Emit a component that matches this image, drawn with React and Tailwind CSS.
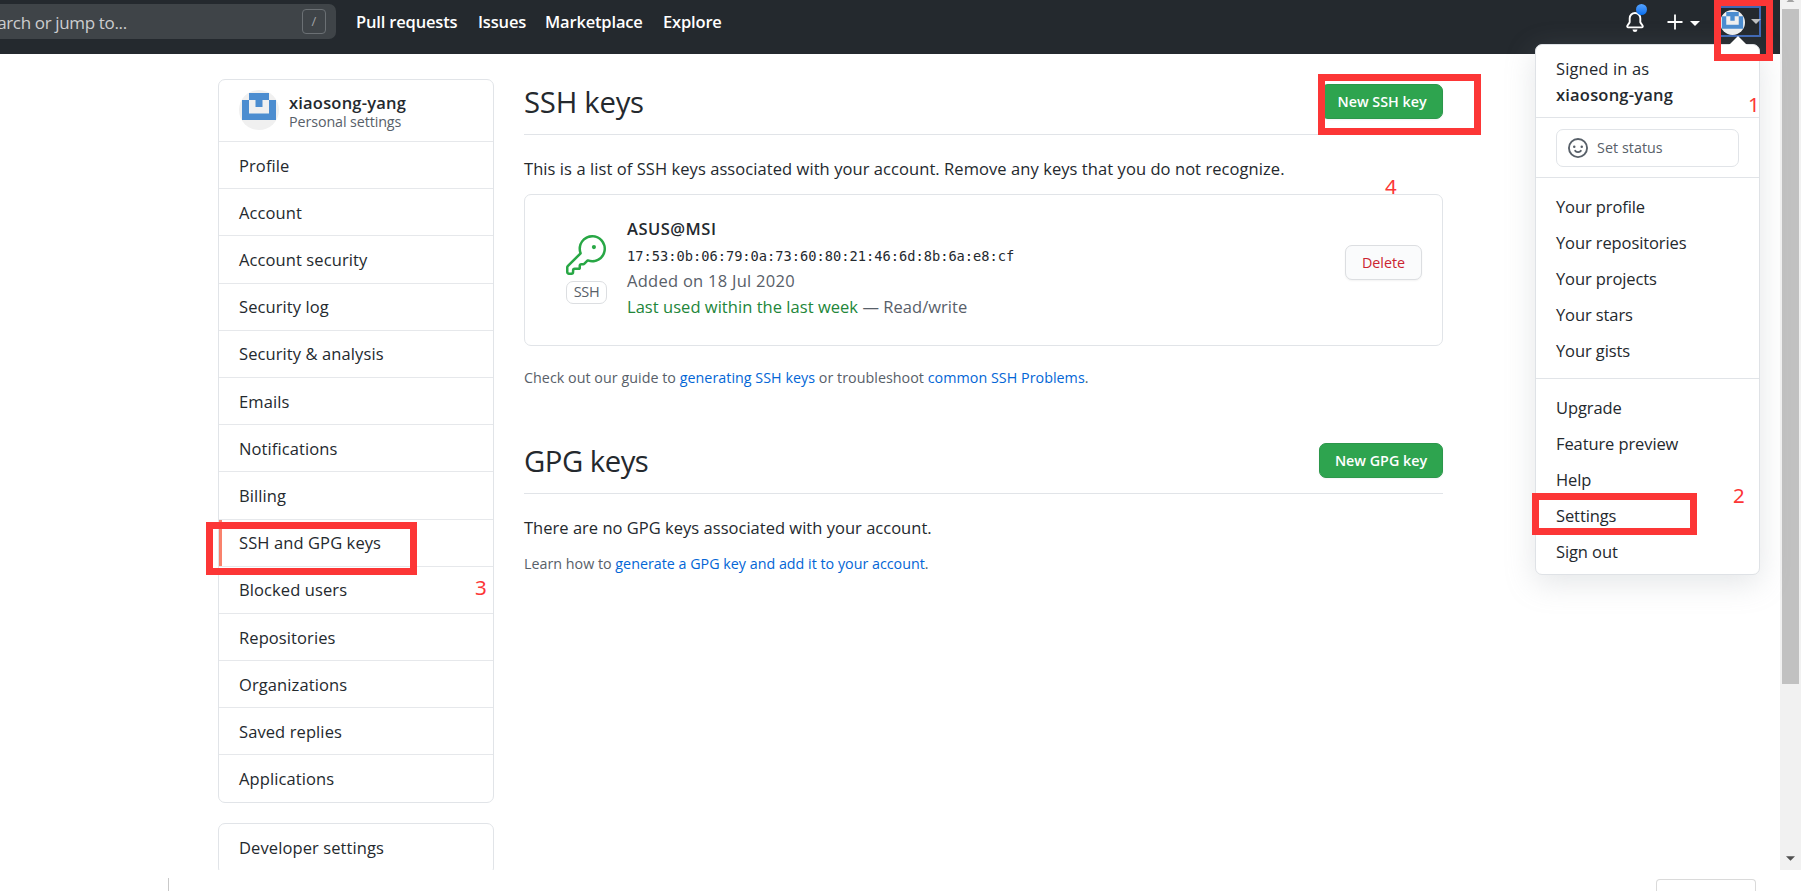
const navItems = [
  'Profile', 'Account', 'Account security', 'Security log', 'Security & analysis', 'Emails', 'Notifications',
  'Billing', 'SSH and GPG keys', 'Blocked users', 'Repositories', 'Organizations', 'Saved replies', 'Applications',
];

function Identicon({ className }) {
  return (
    <svg viewBox="0 0 40 40" className={className}>
      <circle cx="20" cy="20" r="20" fill="#f0f0f0" />
      <path fill="#4c8dd0" fillRule="evenodd" d="M10 3h20v7h7v20H3V10h7zM10 10v13.5h20V10h-6.5v7h-7v-7z" />
    </svg>
  );
}

function Bell() {
  return (
    <svg viewBox="0 0 16 16" fill="currentColor" className="h-5 w-5">
      <path d="M8 16a2 2 0 001.985-1.75c.017-.137-.097-.25-.235-.25h-3.5c-.138 0-.252.113-.235.25A2 2 0 008 16z" />
      <path fillRule="evenodd" d="M8 1.5A3.5 3.5 0 004.5 5v2.947c0 .346-.102.683-.294.97l-1.703 2.556a.018.018 0 00-.003.01l.001.006c0 .002.002.004.004.006a.017.017 0 00.006.004l.007.001h10.964l.007-.001a.016.016 0 00.006-.004.016.016 0 00.004-.006l.001-.007a.017.017 0 00-.003-.01l-1.703-2.554a1.75 1.75 0 01-.294-.97V5A3.5 3.5 0 008 1.5zM3 5a5 5 0 0110 0v2.947c0 .05.015.098.042.139l1.703 2.555A1.518 1.518 0 0113.482 13H2.518a1.518 1.518 0 01-1.263-2.36l1.703-2.554A.25.25 0 003 7.947V5z" />
    </svg>
  );
}

function Smiley() {
  return (
    <svg viewBox="0 0 16 16" fill="currentColor" className="h-5 w-5">
      <path fillRule="evenodd" d="M1.5 8a6.5 6.5 0 1113 0 6.5 6.5 0 01-13 0zM8 0a8 8 0 100 16A8 8 0 008 0zM5 8a1 1 0 100-2 1 1 0 000 2zm7-1a1 1 0 11-2 0 1 1 0 012 0zM5.32 9.636a.75.75 0 011.038.175l.007.009c.103.118.22.222.35.31.264.178.683.37 1.285.37.602 0 1.02-.192 1.285-.371.13-.088.247-.192.35-.31l.007-.008a.75.75 0 111.222.87c-.07.1-.12.16-.204.24-.16.166-.338.316-.53.445-.63.418-1.37.638-2.127.629-.946 0-1.652-.308-2.126-.63a3.331 3.331 0 01-.734-.683.75.75 0 01.183-1.044z" />
    </svg>
  );
}

function Key() {
  return (
    <svg viewBox="0 0 24 24" fill="#28a745" className="-ml-px h-10 w-10">
      <path d="M16.75 8.5a1.25 1.25 0 100-2.5 1.25 1.25 0 000 2.5z" />
      <path fillRule="evenodd" d="M15.75 0a8.25 8.25 0 00-7.851 10.79L.513 18.178A1.75 1.75 0 000 19.414v2.836C0 23.217.784 24 1.75 24h1.5A1.75 1.75 0 005 22.25v-1a.25.25 0 01.25-.25h2.735a.75.75 0 00.545-.22l.214-.213A.875.875 0 009 19.948V18.5a.25.25 0 01.25-.25h1.086c.464 0 .91-.184 1.237-.513l1.636-1.636A8.25 8.25 0 1015.75 0zM9 8.25a6.75 6.75 0 114.288 6.287.75.75 0 00-.804.168l-1.971 1.972a.25.25 0 01-.177.073H9.25A1.75 1.75 0 007.5 18.5v1H5.25a1.75 1.75 0 00-1.75 1.75v1a.25.25 0 01-.25.25h-1.5a.25.25 0 01-.25-.25v-2.836a.25.25 0 01.073-.177l7.722-7.721a.75.75 0 00.168-.804A6.73 6.73 0 019 8.25z" />
    </svg>
  );
}

function Caret({ className }) {
  return (
    <svg viewBox="0 0 10 5" fill="currentColor" className={className}>
      <path d="M0 0h10L5 5z" />
    </svg>
  );
}

function Header() {
  return (
    <header className="flex h-[54px] items-start bg-[#24292e] text-white">
      <div className="mt-1 flex h-[35px] w-[336px] shrink-0 items-center justify-between overflow-hidden rounded-r-[7px] bg-[#3f4448] pr-2.5">
        <span className="-ml-[21px] pt-0.5 text-[17px] tracking-[-0.35px] text-[#cccdcf]">Search or jump to...</span>
        <span className="flex h-[25px] w-6 items-center justify-center rounded-[4px] border border-[#6b7074] text-[13px] text-[#a0a3a6]">/</span>
      </div>
      <nav className="ml-5 flex h-11 items-center gap-5 text-[16.5px] font-semibold tracking-[-0.17px] whitespace-nowrap">
        <span className="w-[102px]">Pull requests</span>
        <span className="w-[47px]">Issues</span>
        <span className="w-[98px]">Marketplace</span>
        <span className="w-[59px]">Explore</span>
      </nav>
      <div className="ml-auto flex h-11 items-center pr-[19px]">
        <span className="relative">
          <Bell />
          <span className="absolute -top-2 left-[11px] h-[11px] w-[11px] rounded-full bg-linear-to-b from-[#54a3ff] to-[#006eed]" />
        </span>
        <svg viewBox="0 0 16 16" className="ml-[22px] h-4 w-4" stroke="white" strokeWidth="1.8"><path d="M8 .5v15M.5 8h15" /></svg>
        <Caret className="ml-[7px] mt-[3px] h-[5px] w-[10px]" />
        <span className="ml-[18px] mt-[-2px] flex h-[31px] w-[43px] items-center gap-[6px] border-2 border-[#4169b5]">
          <Identicon className="mt-[3px] h-[25px] w-[25px] shrink-0" />
          <Caret className="h-[5px] w-[10px] shrink-0 text-[#bdbfc0]" />
        </span>
      </div>
    </header>
  );
}

function Sidebar() {
  return (
    <aside className="ml-[218px] w-[276px] shrink-0">
      <div className="rounded-[7px] border border-[#e1e4e8]">
        <div className="flex h-[61px] items-center pl-5">
          <Identicon className="-mt-px h-10 w-10" />
          <div className="ml-2.5 mt-1">
            <div className="text-[16.5px] leading-[18px] font-semibold tracking-[0.2px]">xiaosong-yang</div>
            <div className="text-[14.3px] leading-[19px] tracking-[-0.1px] text-[#586069]">Personal settings</div>
          </div>
        </div>
        {navItems.map((name) => (
          <div key={name} className={`relative flex h-[47.2px] items-center border-t border-[#e6e8eb] pt-0.5 pl-5 text-[16.5px] tracking-[0.1px] ${name === 'SSH and GPG keys' ? 'before:absolute before:inset-y-0 before:left-0 before:w-[3px] before:bg-[#f9826c]' : ''}`}>
            {name}
          </div>
        ))}
      </div>
      <div className="mt-5 flex h-[52px] items-center rounded-[7px] border border-[#e1e4e8] pl-5 text-[16.5px] tracking-[0.1px]">Developer settings</div>
    </aside>
  );
}

function GreenButton({ className, children }) {
  return (
    <button className={`flex h-[35px] items-center justify-center rounded-[7px] border border-[#2c974b] bg-[#2ea44f] text-[14.3px] font-semibold whitespace-nowrap text-white shadow-xs ${className}`}>
      {children}
    </button>
  );
}

function Content() {
  return (
    <main className="ml-[30px] w-[919px] shrink-0">
      <div className="flex h-14 items-start justify-between border-b border-[#e1e4e8] pt-[5px]">
        <h2 className="text-[29.3px] leading-9 tracking-[-0.25px]">SSH keys</h2>
        <GreenButton className="w-[122px]">New SSH key</GreenButton>
      </div>
      <p className="mt-[21px] text-[16.5px] leading-[26px] whitespace-nowrap tracking-[0.07px]">This is a list of SSH keys associated with your account. Remove any keys that you do not recognize.</p>
      <section className="mt-3 flex h-[152px] items-center rounded-[7px] border border-[#e1e4e8] pr-[20px] pl-[41px]">
        <div className="mb-0.5 flex w-[41px] flex-col items-center">
          <Key />
          <span className="mt-1.5 flex h-[23px] w-[41px] items-center justify-center rounded-[7px] border border-[#dcdee1] text-[14.5px] tracking-[-0.4px] text-[#586069]">SSH</span>
        </div>
        <div className="mb-[5px] ml-5 flex-1 text-[16.5px] leading-[26px] tracking-[0.04px] whitespace-nowrap text-[#586069]">
          <div className="font-semibold tracking-[0.5px] text-[#24292e]">ASUS@MSI</div>
          <div className="pt-0.5 font-['DejaVu_Sans_Mono','Liberation_Mono',monospace] text-[13.7px] leading-6 tracking-normal text-[#24292e]">17:53:0b:06:79:0a:73:60:80:21:46:6d:8b:6a:e8:cf</div>
          <div className="tracking-[0.27px]">Added on 18 Jul 2020</div>
          <div><span className="text-[#22863a]">Last used within the last week</span> — Read/write</div>
        </div>
        <button className="mb-[15px] h-[35px] w-[77px] rounded-[7px] border border-[#dcdee1] bg-[#fafbfc] text-[14.3px] font-medium text-[#cb2431] shadow-xs">Delete</button>
      </section>
      <p className="mt-5 text-[14.3px] leading-6 tracking-[0.03px] whitespace-nowrap text-[#586069]">
        Check out our guide to <a className="text-[#0366d6]">generating SSH keys</a> or troubleshoot <a className="text-[#0366d6]">common SSH Problems</a>.
      </p>
      <div className="mt-[48px] flex h-14 items-start justify-between border-b border-[#e1e4e8] pt-[5px]">
        <h2 className="text-[29.3px] leading-9 tracking-[-0.5px]">GPG keys</h2>
        <GreenButton className="w-[124px]">New GPG key</GreenButton>
      </div>
      <p className="mt-[21px] text-[16.5px] leading-[26px] whitespace-nowrap tracking-[0.02px]">There are no GPG keys associated with your account.</p>
      <p className="mt-[11px] text-[14.3px] leading-6 whitespace-nowrap text-[#586069]">
        Learn how to <a className="text-[#0366d6]">generate a GPG key and add it to your account</a>.
      </p>
    </main>
  );
}

function MenuGroup({ items }) {
  return (
    <div className="border-t border-[#e1e4e8] pt-[11px] pb-[9px]">
      {items.map((item) => <div key={item} className="flex h-9 items-center pl-5">{item}</div>)}
    </div>
  );
}

function UserMenu() {
  return (
    <div className="absolute top-11 left-[1535px] h-[531px] w-[225px] rounded-[7px] border border-[#dfe2e6] bg-white text-[16.5px] tracking-[-0.1px] shadow-[0_8px_30px_rgba(149,157,165,0.25)]">
      <svg viewBox="0 0 18 9" fill="white" className="absolute -top-[9px] left-[193px] h-[9px] w-[18px]"><path d="M9 0l9 9H0z" /></svg>
      <div className="h-[72px] pt-[11px] pl-5 leading-[26px]">
        <div className="tracking-[0.15px]">Signed in as</div>
        <div className="font-semibold tracking-[0.2px]">xiaosong-yang</div>
      </div>
      <div className="h-[60px] border-t border-[#e1e4e8] pt-[11px] pl-5">
        <div className="flex h-[38px] w-[183px] items-center gap-[9px] rounded-[7px] border border-[#e1e4e8] pl-[11px] text-[14.3px] tracking-[0.05px] text-[#586069]"><Smiley />Set status</div>
      </div>
      <MenuGroup items={['Your profile', 'Your repositories', 'Your projects', 'Your stars', 'Your gists']} />
      <MenuGroup items={['Upgrade', 'Feature preview', 'Help', 'Settings', 'Sign out']} />
    </div>
  );
}

function Annotations() {
  return (
    <div className="font-['Noto_Sans','Noto_Sans_CJK_SC',sans-serif] text-[20.5px] leading-5 text-[#fc3636]">
      <div className="absolute -top-px left-[1714px] h-[62px] w-[59px] border-[7px] border-[#fc3636]" />
      <div className="absolute top-[74px] left-[1318px] h-[61px] w-[163px] border-[7px] border-[#fc3636]" />
      <div className="absolute top-[493px] left-[1532px] h-[42px] w-[165px] border-[7px] border-[#fc3636]" />
      <div className="absolute top-[522px] left-[206px] h-[53px] w-[211px] border-[7px] border-[#fc3636]" />
      <span className="absolute top-[94px] left-[1748px]">1</span>
      <span className="absolute top-[485px] left-[1733px]">2</span>
      <span className="absolute top-[577px] left-[475px]">3</span>
      <span className="absolute top-[176px] left-[1385px]">4</span>
    </div>
  );
}

export default function App() {
  return (
    <div className="relative h-[891px] w-[1801px] overflow-hidden bg-white font-['Open_Sans','Noto_Sans',sans-serif] text-[#24292e]">
      <div className="flex h-[870px] overflow-hidden">
        <div className="w-[1780px] shrink-0">
          <Header />
          <div className="flex pt-[25px]">
            <Sidebar />
            <Content />
          </div>
        </div>
        <div className="flex w-[21px] flex-col items-center bg-[#f1f1f1]">
          <Caret className="h-[4px] w-[9px] shrink-0 -mt-0.5 rotate-180 text-[#a3a3a3]" />
          <div className="mt-[7px] h-[675px] w-[17px] shrink-0 bg-[#c1c1c1]" />
          <Caret className="mt-[172px] h-[5px] w-[9px] shrink-0 text-[#505050]" />
        </div>
      </div>
      <div className="flex items-end justify-between pt-2 pr-[45px] pl-[168px]">
        <div className="h-[13px] w-px bg-[#c9c9c9]" />
        <div className="h-3 w-[100px] rounded-t-[4px] border border-b-0 border-[#dadada]" />
      </div>
      <UserMenu />
      <Annotations />
    </div>
  );
}
